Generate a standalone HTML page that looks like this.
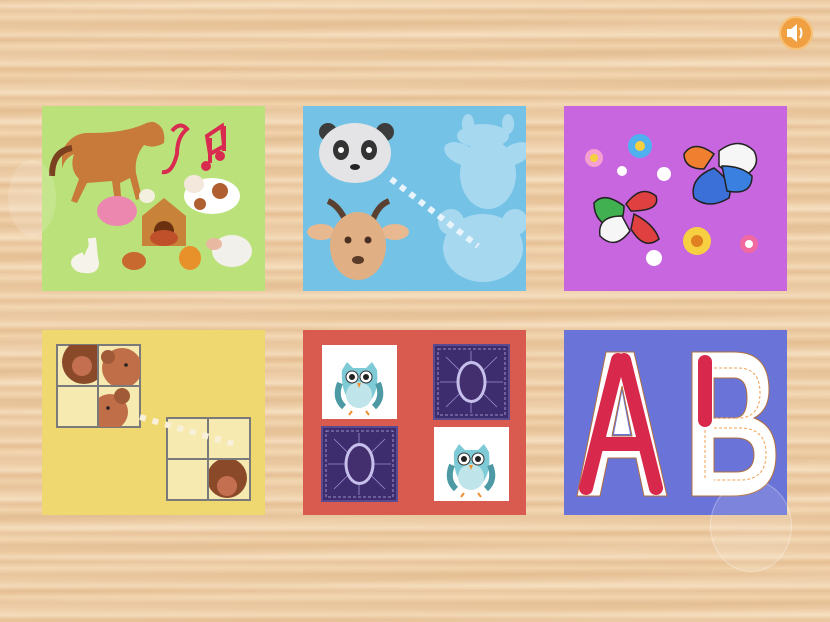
<!DOCTYPE html>
<html><head><meta charset="utf-8"><style>
html,body{margin:0;padding:0}
body{width:830px;height:622px;overflow:hidden;position:relative;font-family:"Liberation Sans",sans-serif;
background:
repeating-linear-gradient(180deg,rgba(255,255,255,0) 0px,rgba(255,240,215,.45) 6px,rgba(210,160,110,.2) 11px,rgba(255,235,200,.3) 17px,rgba(200,150,100,.15) 23px,rgba(255,255,255,0) 29px),
repeating-linear-gradient(178deg,rgba(220,170,120,.15) 0px,rgba(255,240,220,.2) 13px,rgba(220,170,120,.12) 37px),
#ebc9a0;}
.c{position:absolute;width:223px;height:185px;box-sizing:border-box}
svg{position:absolute;left:0;top:0}
</style></head><body>

<div style="position:absolute;left:779px;top:16px;width:34px;height:34px;border-radius:50%;background:#f0a040;box-shadow:inset 0 0 0 2px #f7c27a"></div>
<svg width="830" height="622" style="pointer-events:none">
<path d="M787 29h4l6-5v18l-6-5h-4z" fill="#fff"/>
<path d="M800 28q3 5 0 10" stroke="#fff" stroke-width="2" fill="none"/>
</svg>

<div class="c" style="left:42px;top:106px;background:#bbe27a">
<svg width="223" height="185">
<path d="M20 45q10-20 30-18 30 0 50-8 10-5 14-2 10 5 8 20-10 6-20 2-10 12-8 28l6 25-6 2-6-22-10 5 2 26-6 0-4-28-25 2-10 20-6-2 8-22q-10-10-5-25-10 5-12 15z" fill="#c87a3a"/>
<path d="M10 70q0-25 20-28" stroke="#7a4020" stroke-width="6" fill="none"/>
<path d="M130 25q8-10 15-2-10 8-10 25-5 20-15 18" stroke="#d92a50" stroke-width="4" fill="none"/>
<path d="M165 30l15-10 2 20-14 8zM168 32v25M182 20v25" stroke="#d92a50" stroke-width="4" fill="none"/>
<circle cx="164" cy="60" r="5" fill="#d92a50"/><circle cx="178" cy="50" r="5" fill="#d92a50"/>
<ellipse cx="170" cy="90" rx="28" ry="18" fill="#fff"/><circle cx="178" cy="85" r="8" fill="#b06030"/><circle cx="158" cy="98" r="6" fill="#b06030"/>
<ellipse cx="152" cy="78" rx="10" ry="9" fill="#f4e8dc"/>
<ellipse cx="75" cy="105" rx="20" ry="15" fill="#ec88b0"/>
<path d="M100 110l22-18 22 18v30h-44z" fill="#c8823a"/><circle cx="122" cy="125" r="10" fill="#6a3010"/><ellipse cx="122" cy="132" rx="14" ry="8" fill="#c0502a"/>
<ellipse cx="105" cy="90" rx="8" ry="7" fill="#f4f0e0"/>
<ellipse cx="190" cy="145" rx="20" ry="16" fill="#f2f0ea"/><ellipse cx="172" cy="138" rx="8" ry="6" fill="#e8b8a0"/>
<path d="M42 150q-15 5-5 12 20 5 15-10l-2-20" stroke="#f6f3ea" stroke-width="8" fill="#f6f3ea"/>
<ellipse cx="92" cy="155" rx="12" ry="9" fill="#c86a30"/><ellipse cx="148" cy="152" rx="11" ry="12" fill="#e8902a"/>
</svg></div>

<div class="c" style="left:303px;top:106px;background:#74c2e6">
<svg width="223" height="185">
<g fill="#a6d8f0">
<ellipse cx="185" cy="68" rx="28" ry="35"/>
<ellipse cx="158" cy="48" rx="18" ry="10" transform="rotate(25 158 48)"/>
<ellipse cx="212" cy="48" rx="18" ry="10" transform="rotate(-25 212 48)"/>
<ellipse cx="165" cy="18" rx="6" ry="10"/><ellipse cx="205" cy="18" rx="6" ry="10"/>
<ellipse cx="180" cy="30" rx="26" ry="12"/>
<ellipse cx="180" cy="142" rx="40" ry="34"/>
<circle cx="148" cy="116" r="13"/><circle cx="212" cy="116" r="13"/>
</g>
<circle cx="25" cy="26" r="9" fill="#3c3c3c"/><circle cx="82" cy="26" r="9" fill="#3c3c3c"/>
<ellipse cx="52" cy="47" rx="36" ry="30" fill="#e4e4e6"/>
<ellipse cx="38" cy="44" rx="8" ry="10" fill="#333"/><ellipse cx="66" cy="44" rx="8" ry="10" fill="#333"/>
<circle cx="38" cy="44" r="3" fill="#fff"/><circle cx="66" cy="44" r="3" fill="#fff"/>
<ellipse cx="52" cy="61" rx="5" ry="3" fill="#222"/>
<path d="M88 73 L175 140" stroke="#e8f4fb" stroke-width="6" stroke-dasharray="6 6"/>
<path d="M45 120q-8-20-20-25M68 120q5-20 18-25" stroke="#5a4030" stroke-width="6" fill="none"/>
<ellipse cx="18" cy="126" rx="14" ry="8" fill="#e8b890"/><ellipse cx="92" cy="126" rx="14" ry="8" fill="#e8b890"/>
<ellipse cx="55" cy="140" rx="28" ry="34" fill="#e0b084"/>
<circle cx="45" cy="134" r="3.5" fill="#4a3020"/><circle cx="65" cy="134" r="3.5" fill="#4a3020"/>
<ellipse cx="55" cy="154" rx="6" ry="4" fill="#5a3a28"/>
</svg></div>

<div class="c" style="left:564px;top:106px;background:#c866e0">
<svg width="223" height="185">
<g stroke="#222" stroke-width="1.5">
<path d="M155 45q20-15 35 0 8 15-10 25-12 0-25-10z" fill="#f6f6f6"/>
<path d="M150 48q-20-15-30 0 0 15 20 15z" fill="#f08030"/>
<path d="M150 62q-25 10-20 30 15 12 35 0 5-15-15-30z" fill="#3a70d8"/>
<path d="M158 60q20 0 30 10 0 20-25 15z" fill="#3a80e0"/>
<path d="M60 100q-20-15-30-3 0 20 20 25 10-5 10-22z" fill="#40b050"/>
<path d="M62 98q15-20 30-8 5 15-25 15z" fill="#e04040"/>
<path d="M58 110q-25 0-22 20 15 15 30-5z" fill="#f6f6f6"/>
<path d="M70 108q20 10 25 25-15 12-28-10z" fill="#e04040"/>
</g>
<circle cx="30" cy="52" r="9" fill="#f4a0d0"/><circle cx="30" cy="52" r="4" fill="#f6d040"/>
<circle cx="76" cy="40" r="12" fill="#50b0f0"/><circle cx="76" cy="40" r="5" fill="#f6d040"/>
<circle cx="133" cy="135" r="14" fill="#f6d040"/><circle cx="133" cy="135" r="6" fill="#e08020"/>
<circle cx="185" cy="138" r="9" fill="#f06aa0"/><circle cx="185" cy="138" r="4" fill="#fff"/>
<circle cx="100" cy="68" r="7" fill="#fff"/><circle cx="90" cy="152" r="8" fill="#fff"/><circle cx="58" cy="65" r="5" fill="#fff"/>
</svg></div>

<div class="c" style="left:42px;top:330px;background:#f0d870">
<svg width="223" height="185">
<rect x="15" y="15" width="83" height="82" fill="#f6eab0" stroke="#7a7a7a" stroke-width="2"/>
<clipPath id="a"><rect x="15" y="15" width="41" height="41"/></clipPath>
<g clip-path="url(#a)"><circle cx="42" cy="32" r="22" fill="#8a4a2a"/><circle cx="40" cy="36" r="10" fill="#c47050"/></g>
<clipPath id="b"><rect x="57" y="15" width="41" height="41"/></clipPath>
<g clip-path="url(#b)"><circle cx="80" cy="38" r="20" fill="#c06e48"/><circle cx="66" cy="27" r="7" fill="#a05a38"/><circle cx="84" cy="35" r="1.8" fill="#222"/></g>
<clipPath id="c"><rect x="57" y="57" width="41" height="40"/></clipPath>
<g clip-path="url(#c)"><circle cx="68" cy="82" r="18" fill="#c06e48"/><circle cx="80" cy="66" r="8" fill="#a05a38"/><circle cx="66" cy="78" r="1.8" fill="#222"/></g>
<path d="M15 56h83M56 15v82" stroke="#7a7a7a" stroke-width="2"/>
<rect x="125" y="88" width="83" height="82" fill="#f6eab0" stroke="#7a7a7a" stroke-width="2"/>
<clipPath id="d"><rect x="167" y="130" width="41" height="40"/></clipPath>
<g clip-path="url(#d)"><circle cx="185" cy="148" r="20" fill="#8a4a2a"/><circle cx="185" cy="156" r="10" fill="#c47050"/></g>
<path d="M125 129h83M166 88v82" stroke="#7a7a7a" stroke-width="2"/>
<path d="M98 87 L192 114" stroke="#f8f0d8" stroke-width="6" stroke-dasharray="6 7"/>
</svg></div>

<div class="c" style="left:303px;top:330px;background:#d95b50">
<svg width="223" height="185">
<defs><g id="owl">
<rect width="75" height="74" fill="#fff"/>
<path d="M20 25l5-8 6 6h13l6-6 5 8q3 30-17 38-20-8-18-38z" fill="#7ecad6"/>
<ellipse cx="37" cy="50" rx="13" ry="13" fill="#bfe5ea"/>
<path d="M18 38q-6 15 4 24M56 38q6 15-4 24" stroke="#4e9aa4" stroke-width="6" fill="none"/>
<circle cx="30" cy="32" r="6" fill="#fff" stroke="#333" stroke-width="1"/><circle cx="44" cy="32" r="6" fill="#fff" stroke="#333" stroke-width="1"/>
<circle cx="30" cy="32" r="3" fill="#222"/><circle cx="44" cy="32" r="3" fill="#222"/>
<path d="M35 38h4l-2 5z" fill="#f09030"/><path d="M30 66l-3 4M44 66l3 4" stroke="#f09030" stroke-width="2"/>
</g>
<g id="back"><rect width="75" height="74" fill="#3e2d6e" stroke="#5a4a90" stroke-width="2"/>
<rect x="4" y="4" width="67" height="66" fill="none" stroke="#b8aee0" stroke-width=".8" stroke-dasharray="3 2"/>
<path d="M37 6v62M6 37h63M12 12l51 50M63 12l-51 50" stroke="#9a8ed0" stroke-width=".8"/>
<ellipse cx="37.5" cy="37" rx="15" ry="21" fill="#c8c0ec"/><ellipse cx="37.5" cy="37" rx="12" ry="18" fill="#432f6e"/></g></defs>
<use href="#owl" x="19" y="15"/><use href="#back" x="131" y="15"/>
<use href="#back" x="19" y="97"/><use href="#owl" x="131" y="97"/>
</svg></div>

<div class="c" style="left:564px;top:330px;background:#6a74d8">
<svg width="223" height="185">
<path d="M42 22H70L103 166H80L72 128H44L36 166H13Z M48 106H68L58 56Z" fill="#fff" stroke="#b07040" stroke-width="1" fill-rule="evenodd"/>
<path d="M54 30L22 158M60 30L92 158M38 114H78" stroke="#d8294c" stroke-width="14" stroke-linecap="round" fill="none"/>
<path d="M50 104H66L58 62Z" fill="#fff"/>
<path d="M128 22H170Q205 22 205 60Q205 80 190 88Q212 96 212 125Q212 166 168 166H128Z M150 48V88H170Q183 88 183 68Q183 48 170 48Z M150 108V142H172Q190 142 190 125Q190 108 172 108Z" fill="#fff" stroke="#b07040" stroke-width="1" fill-rule="evenodd"/>
<path d="M141 32V90" stroke="#d8294c" stroke-width="14" stroke-linecap="round"/>
<path d="M150 38h24q22 0 22 25t-22 25h-24M150 98h26q26 0 26 26t-26 26h-26M141 100v50" stroke="#f0a050" stroke-width="1" stroke-dasharray="3 2" fill="none"/>
</svg></div>

<div style="position:absolute;left:8px;top:160px;width:48px;height:76px;border-radius:50%;background:rgba(255,255,255,.15)"></div>
<div style="position:absolute;left:710px;top:480px;width:80px;height:90px;border-radius:50%;background:rgba(255,255,255,.12);border:1px solid rgba(255,255,255,.3)"></div>
</body></html>
